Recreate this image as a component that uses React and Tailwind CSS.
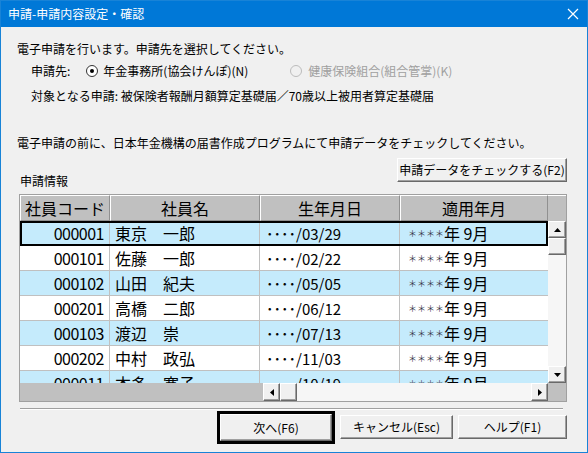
import React from 'react';

const rows = [
  { code: '000001', name: '東京　一郎', date: '････/03/29' },
  { code: '000101', name: '佐藤　一郎', date: '････/02/22' },
  { code: '000102', name: '山田　紀夫', date: '････/05/05' },
  { code: '000201', name: '高橋　二郎', date: '････/06/12' },
  { code: '000103', name: '渡辺　崇', date: '････/07/13' },
  { code: '000202', name: '中村　政弘', date: '････/11/03' },
  { code: '000011', name: '本多　寛子', date: '････/10/19' },
];

const raised =
  'bg-[#f0f0f0] border border-t-white border-l-white border-r-[#696969] border-b-[#696969] shadow-[inset_-1px_-1px_0_#a0a0a0]';

const Arrow = ({ dir }) => {
  const pts = {
    up: '0,4 7,4 3.5,0',
    down: '0,0 7,0 3.5,4',
    left: '4,0 4,7 0,3.5',
    right: '0,0 0,7 4,3.5',
  }[dir];
  const vertical = dir === 'up' || dir === 'down';
  return (
    <svg width={vertical ? 7 : 4} height={vertical ? 4 : 7}>
      <polygon points={pts} fill="#000" />
    </svg>
  );
};

const ScrollBtn = ({ dir, className = '' }) => (
  <div className={`flex items-center justify-center ${raised} ${className}`}>
    <Arrow dir={dir} />
  </div>
);

const Radio = ({ checked, disabled }) => (
  <span
    className={`w-[12px] h-[12px] rounded-full border flex items-center justify-center ${
      disabled ? 'border-[#bcbcbc] bg-[#f0f0f0]' : 'border-[#333] bg-white'
    }`}
  >
    {checked && <span className="w-[4px] h-[4px] rounded-full bg-black" />}
  </span>
);

export default function App() {
  return (
    <div className="w-[588px] h-[453px] bg-[#f0f0f0] border border-[#1883d7] flex flex-col font-['Noto_Sans_CJK_JP',sans-serif] text-black overflow-hidden">
      {/* title bar */}
      <div className="h-[26px] bg-[#0078d7] flex items-center justify-between pl-[7px] pr-[8px] text-white text-[12px] leading-none shrink-0">
        <span>申請-申請内容設定・確認</span>
        <svg width="12" height="12" viewBox="0 0 12 12">
          <path d="M1 1L11 11M11 1L1 11" stroke="#fff" strokeWidth="1.2" />
        </svg>
      </div>

      <div className="flex flex-col pl-[16px] text-[12px] leading-[16px]">
        <div className="mt-[14px]">電子申請を行います。申請先を選択してください。</div>

        <div className="mt-[6px] pl-[14px] flex items-center">
          <span>申請先:</span>
          <span className="ml-[16px] flex items-center gap-[5px]">
            <Radio checked />
            <span>年金事務所(協会けんぽ)(N)</span>
          </span>
          <span className="ml-[42px] flex items-center gap-[6px] text-[#a0a0a0]">
            <Radio disabled />
            <span>健康保険組合(組合管掌)(K)</span>
          </span>
        </div>

        <div className="mt-[9px] pl-[14px]">対象となる申請: 被保険者報酬月額算定基礎届／70歳以上被用者算定基礎届</div>

        <div className="mt-[31px]">電子申請の前に、日本年金機構の届書作成プログラムにて申請データをチェックしてください。</div>

        <div className="mt-[7px] h-[36px] flex justify-between items-start pr-[20px]">
          <span className="mt-[15px] ml-[3px]">申請情報</span>
          <button className={`w-[170px] h-[24px] text-[12px] ${raised}`}>申請データをチェックする(F2)</button>
        </div>

        {/* grid */}
        <div className="ml-[2px] w-[548px] h-[208px] border border-[#a0a0a0] flex flex-col bg-[#c0c0c0]">
          <div className="h-[26px] flex text-[16px] leading-none shrink-0">
            {[
              ['社員コード', 'w-[90px]'],
              ['社員名', 'w-[150px]'],
              ['生年月日', 'w-[140px]'],
              ['適用年月', 'w-[148px]'],
            ].map(([t, w]) => (
              <div
                key={t}
                className={`${w} flex items-center justify-center border-t border-l border-t-white border-l-white border-r border-r-[#909090] border-b border-b-[#909090]`}
              >
                {t}
              </div>
            ))}
            <div className="flex-1 border-t border-t-white" />
          </div>

          <div className="h-[162px] flex shrink-0">
            <div className="w-[528px] overflow-hidden relative bg-white">
              {rows.map((r, i) => (
                <div
                  key={r.code}
                  className={`h-[25px] flex border-b border-[#c0c0c0] text-[16px] leading-none ${
                    i % 2 === 0 ? 'bg-[#c5ebfc]' : 'bg-white'
                  }`}
                >
                  <div className="w-[90px] flex items-center justify-end pr-[5px] border-r border-[#c0c0c0] tracking-[-0.5px]">
                    {r.code}
                  </div>
                  <div className="w-[150px] flex items-center pl-[5px] border-r border-[#c0c0c0]">{r.name}</div>
                  <div className="w-[140px] flex items-center pl-[6px] border-r border-[#c0c0c0] text-[15px]">{r.date}</div>
                  <div className="flex-1 flex items-center pl-[8px]">
                    <span className="text-[9px] text-[#3a3a4a]">＊＊＊＊</span>
                    <span>年 9月</span>
                  </div>
                </div>
              ))}
              <div className="absolute left-0 top-0 w-[528px] h-[25px] border-2 border-black pointer-events-none" />
            </div>
            <div className="w-[18px] flex flex-col bg-[#f6f6f6]">
              <ScrollBtn dir="up" className="h-[17px]" />
              <div className={`h-[17px] ${raised}`} />
              <div className="flex-1" />
              <ScrollBtn dir="down" className="h-[17px]" />
            </div>
          </div>

          <div className="h-[18px] flex shrink-0">
            <div className="w-[243px] bg-[#c0c0c0]" />
            <ScrollBtn dir="left" className="w-[17px]" />
            <div className={`w-[17px] ${raised}`} />
            <div className="flex-1 bg-[#f6f6f6]" />
            <ScrollBtn dir="right" className="w-[17px]" />
            <div className="w-[18px] bg-[#c0c0c0]" />
          </div>
        </div>

        <div className="mt-[6px] ml-[3px] w-[543px] h-[2px] border-t border-t-[#a0a0a0] border-b border-b-white" />

        <div className="mt-[1px] flex justify-end pr-[20px]">
          <div className="w-[118px] h-[33px] border-[3px] border-black flex">
            <button className={`flex-1 text-[12px] ${raised}`}>次へ(F6)</button>
          </div>
          <button className={`ml-[5px] mt-[4px] w-[113px] h-[24px] text-[12px] ${raised}`}>キャンセル(Esc)</button>
          <button className={`ml-[5px] mt-[4px] w-[109px] h-[24px] text-[12px] ${raised}`}>ヘルプ(F1)</button>
        </div>
      </div>
    </div>
  );
}
